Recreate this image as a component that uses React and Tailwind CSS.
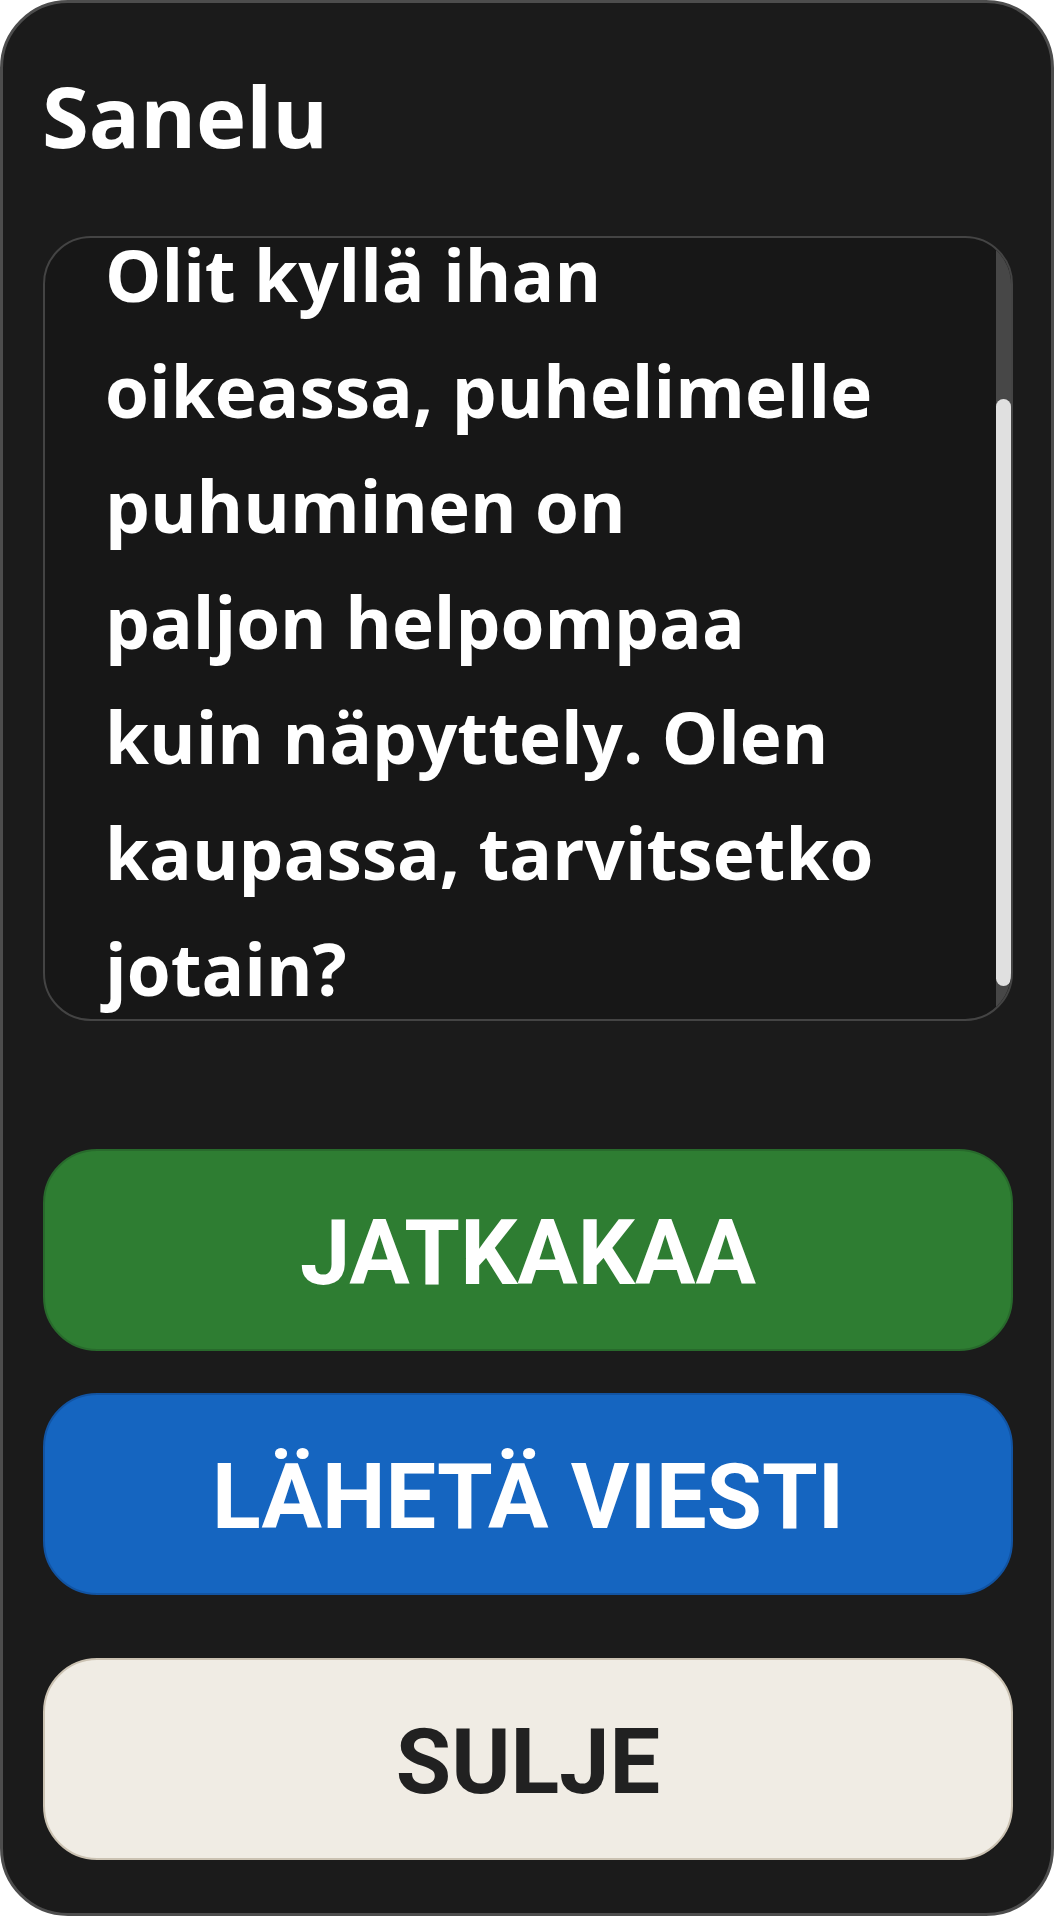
export default function App() {
  const lines = [
    'Olit kyllä ihan',
    'oikeassa, puhelimelle',
    'puhuminen on',
    'paljon helpompaa',
    'kuin näpyttely. Olen',
    'kaupassa, tarvitsetko',
    'jotain?',
  ];

  return (
    <div className="w-[1054px] h-[1916px] bg-white">
      <div className="h-full flex flex-col rounded-[68px] border-[3px] border-[#4d4d4d] bg-[#1b1b1b] pl-[40px] pr-[38px] pt-[59px]">
        <h1 className="-ml-[1px] text-[85px] leading-[106px] font-bold text-white font-['Open_Sans',sans-serif]">
          Sanelu
        </h1>

        <div className="relative mt-[68px] h-[785px] shrink-0 overflow-hidden rounded-[48px] border-2 border-[#444444] bg-[#171717]">
          <div className="-mt-[21px] pl-[60px] text-[71px] leading-[115.6px] font-bold text-white font-['Open_Sans',sans-serif]">
            {lines.map((l) => (
              <div key={l} className="whitespace-nowrap">{l}</div>
            ))}
          </div>
          <div className="absolute right-0 top-0 bottom-0 w-[15px] bg-[#474747]">
            <div className="absolute left-0 right-0 top-[161px] h-[587px] rounded-full bg-[#e0e0e0]" />
          </div>
        </div>

        <button className="mt-[128px] h-[202px] shrink-0 flex items-center justify-center pt-[8px] rounded-[54px] border-2 border-[#286a2c] bg-[#2e7d32] text-white text-[90px] leading-none font-bold font-['Roboto',sans-serif]">
          JATKAKAA
        </button>
        <button className="mt-[42px] h-[202px] shrink-0 flex items-center justify-center pt-[8px] rounded-[54px] border-2 border-[#1254a3] bg-[#1565c0] text-white text-[90px] leading-none font-bold font-['Roboto',sans-serif]">
          LÄHETÄ VIESTI
        </button>
        <button className="mt-[63px] h-[202px] shrink-0 flex items-center justify-center pt-[8px] rounded-[54px] border-2 border-[#cbc2b2] bg-[#f0ece4] text-[#212121] text-[90px] leading-none font-bold font-['Roboto',sans-serif]">
          SULJE
        </button>
      </div>
    </div>
  );
}
